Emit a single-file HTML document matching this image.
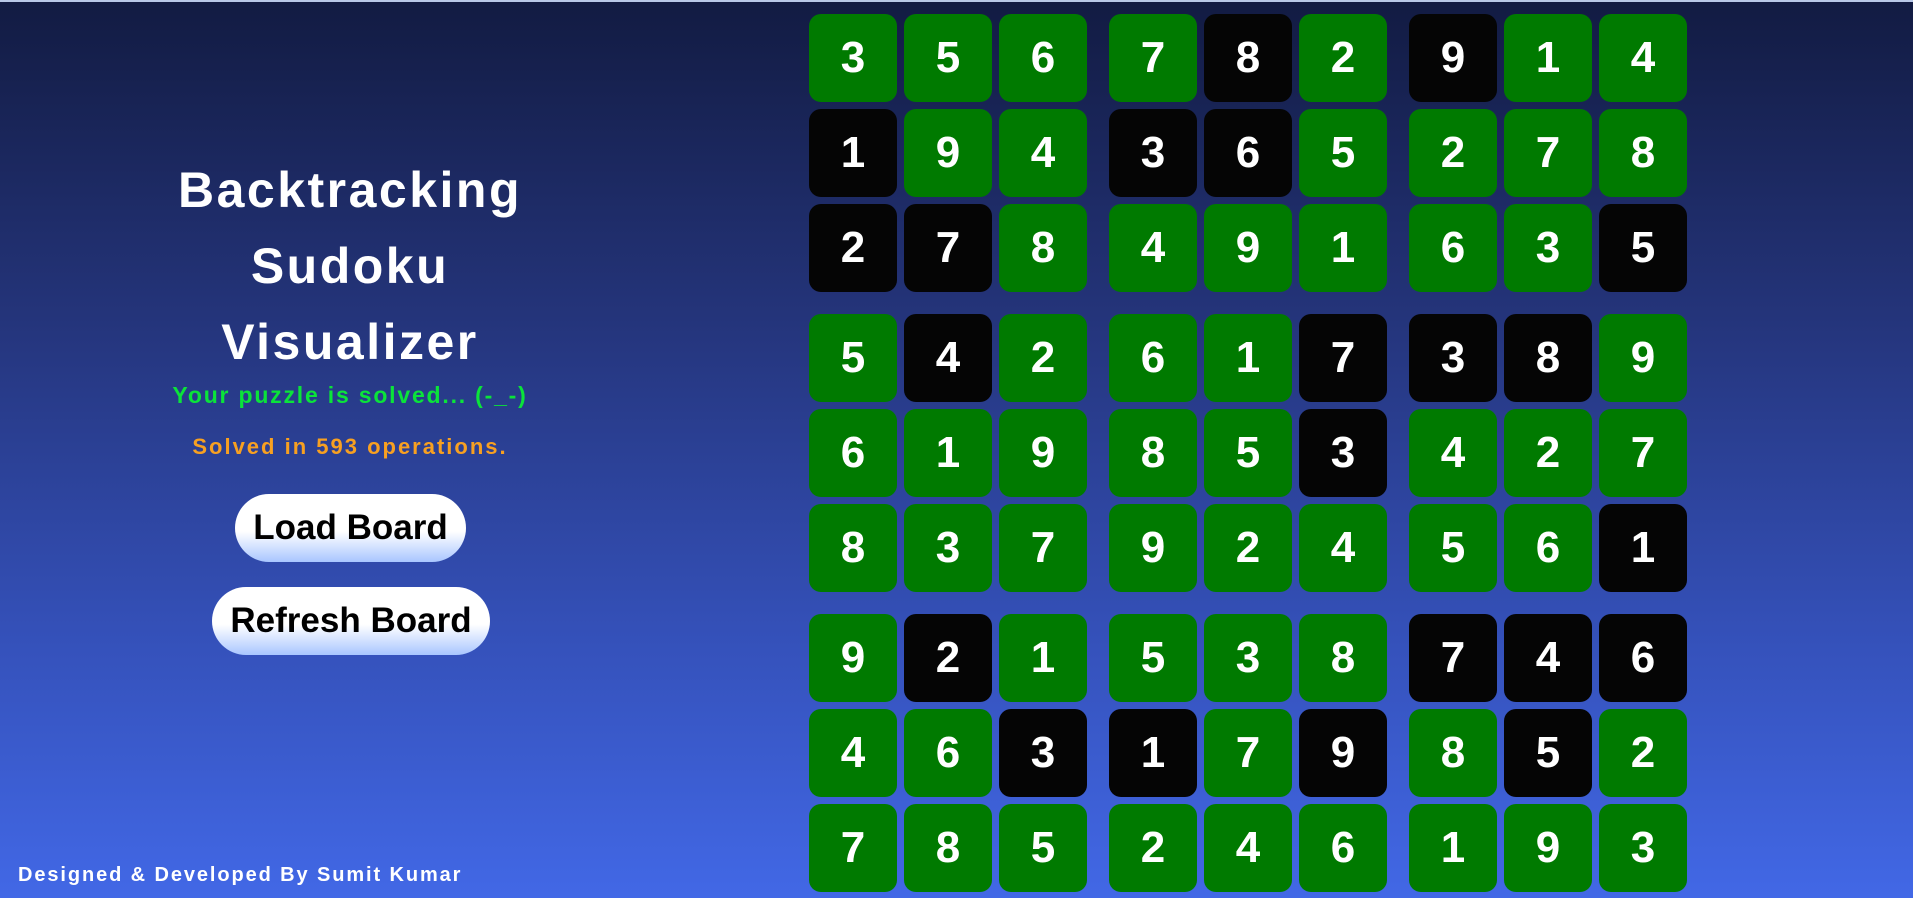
<!DOCTYPE html>
<html><head><meta charset="utf-8"><style>
*{margin:0;padding:0;box-sizing:border-box}
html,body{width:1913px;height:898px;overflow:hidden}
body{background:linear-gradient(180deg,#121b42 0%,#24347a 35%,#3450b8 70%,#4268e6 100%);font-family:"Liberation Sans",sans-serif;position:relative;border-top:2px solid #b8c8e8}
.t{position:absolute;left:0;width:700px;text-align:center;color:#fff;font-weight:bold}
.title{top:150px;font-size:50px;line-height:76px;letter-spacing:2.5px}
.g{top:380px;font-size:23px;color:#0be33a;letter-spacing:1.8px}
.o{top:432px;font-size:22px;color:#f7a021;letter-spacing:2px}
.btn{position:absolute;border-radius:40px;background:linear-gradient(180deg,#fff 0%,#fff 55%,#a9c6ff 100%);color:#000;font-size:35px;font-weight:bold;text-align:center;line-height:68px;height:68px}
.foot{position:absolute;left:18px;top:862px;color:#fff;font-size:20px;font-weight:bold;letter-spacing:1.9px}
.grid{position:absolute;left:809px;top:12px}
.r{display:flex;height:88px;margin-top:7px}
.r.B{margin-top:22px}
.r:first-child{margin-top:0}
.c{width:88px;height:88px;border-radius:12px;background:#007a00;color:#fff;font-weight:bold;font-size:44px;display:flex;align-items:center;justify-content:center;margin-left:7px}
.c:first-child{margin-left:0}
.c.s{margin-left:22px}
.c.k{background:#050505}
</style></head><body>
<div class="t title">Backtracking<br>Sudoku<br>Visualizer</div>
<div class="t g">Your puzzle is solved... (-_-)</div>
<div class="t o">Solved in 593 operations.</div>
<div class="btn" style="left:235px;top:492px;width:231px">Load Board</div>
<div class="btn" style="left:212px;top:585px;width:278px">Refresh Board</div>
<div class="foot">Designed &amp; Developed By Sumit Kumar</div>
<div class="grid">
<div class="r"><div class="c">3</div><div class="c">5</div><div class="c">6</div><div class="c s">7</div><div class="c k">8</div><div class="c">2</div><div class="c s k">9</div><div class="c">1</div><div class="c">4</div></div>
<div class="r"><div class="c k">1</div><div class="c">9</div><div class="c">4</div><div class="c s k">3</div><div class="c k">6</div><div class="c">5</div><div class="c s">2</div><div class="c">7</div><div class="c">8</div></div>
<div class="r"><div class="c k">2</div><div class="c k">7</div><div class="c">8</div><div class="c s">4</div><div class="c">9</div><div class="c">1</div><div class="c s">6</div><div class="c">3</div><div class="c k">5</div></div>
<div class="r B"><div class="c">5</div><div class="c k">4</div><div class="c">2</div><div class="c s">6</div><div class="c">1</div><div class="c k">7</div><div class="c s k">3</div><div class="c k">8</div><div class="c">9</div></div>
<div class="r"><div class="c">6</div><div class="c">1</div><div class="c">9</div><div class="c s">8</div><div class="c">5</div><div class="c k">3</div><div class="c s">4</div><div class="c">2</div><div class="c">7</div></div>
<div class="r"><div class="c">8</div><div class="c">3</div><div class="c">7</div><div class="c s">9</div><div class="c">2</div><div class="c">4</div><div class="c s">5</div><div class="c">6</div><div class="c k">1</div></div>
<div class="r B"><div class="c">9</div><div class="c k">2</div><div class="c">1</div><div class="c s">5</div><div class="c">3</div><div class="c">8</div><div class="c s k">7</div><div class="c k">4</div><div class="c k">6</div></div>
<div class="r"><div class="c">4</div><div class="c">6</div><div class="c k">3</div><div class="c s k">1</div><div class="c">7</div><div class="c k">9</div><div class="c s">8</div><div class="c k">5</div><div class="c">2</div></div>
<div class="r"><div class="c">7</div><div class="c">8</div><div class="c">5</div><div class="c s">2</div><div class="c">4</div><div class="c">6</div><div class="c s">1</div><div class="c">9</div><div class="c">3</div></div>
</div>
</body></html>
